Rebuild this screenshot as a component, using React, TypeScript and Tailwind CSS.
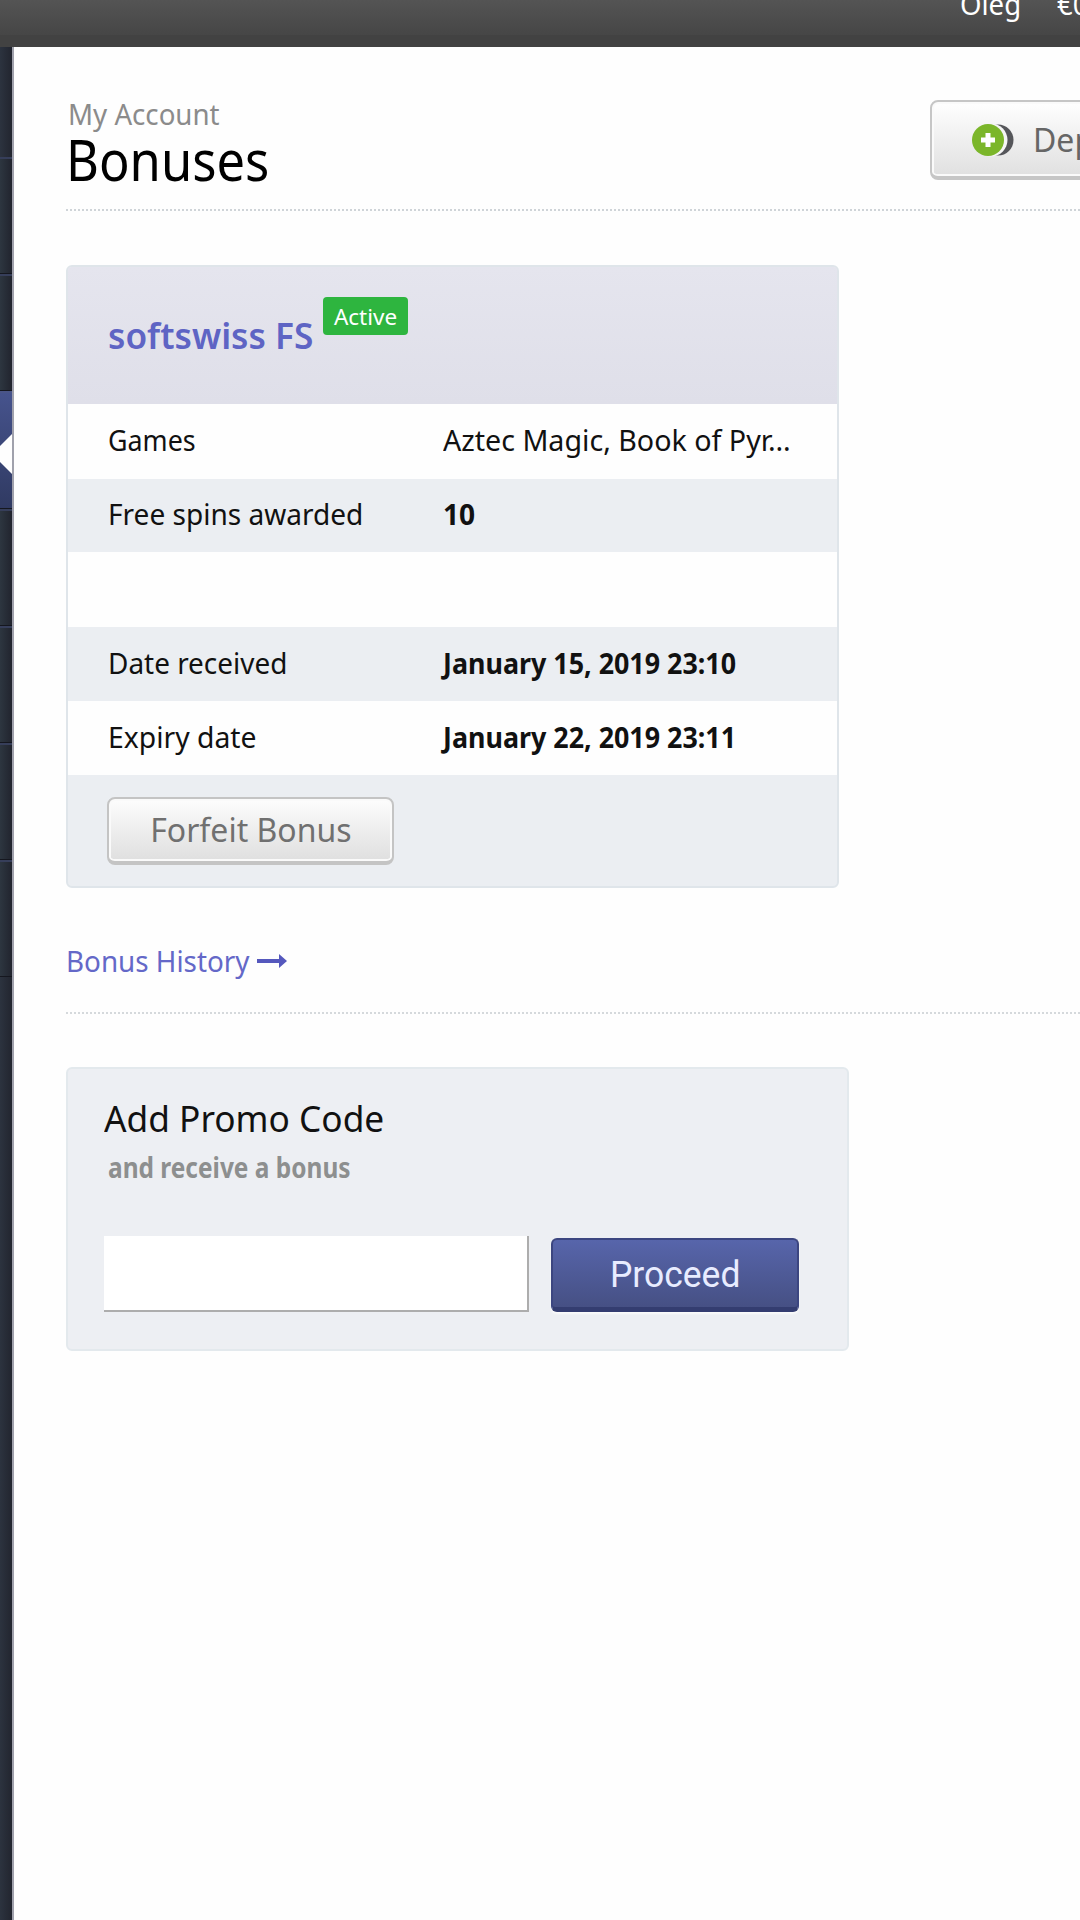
import React from 'react';

const rows = [
  { label: 'Games', labelScale: 'scale-x-[0.925]', value: 'Aztec Magic, Book of Pyr…', valueScale: 'scale-x-[0.987]', height: 'h-[75px]', bg: 'bg-[#fefefe]', bold: false },
  { label: 'Free spins awarded', labelScale: 'scale-x-[0.967]', value: '10', valueScale: 'scale-x-[0.97]', height: 'h-[73px]', bg: 'bg-[#ebeef2]', bold: true },
  { label: '', labelScale: '', value: '', valueScale: '', height: 'h-[75px]', bg: 'bg-[#fefefe]', bold: false },
  { label: 'Date received', labelScale: 'scale-x-[0.963]', value: 'January 15, 2019 23:10', valueScale: 'scale-x-[0.926]', height: 'h-[74px]', bg: 'bg-[#ebeef2]', bold: true },
  { label: 'Expiry date', labelScale: 'scale-x-[0.977]', value: 'January 22, 2019 23:11', valueScale: 'scale-x-[0.926]', height: 'h-[74px]', bg: 'bg-[#fefefe]', bold: true },
];

const menuItems = [
  { id: 1, active: false },
  { id: 2, active: false },
  { id: 3, active: true },
  { id: 4, active: false },
  { id: 5, active: false },
  { id: 6, active: false },
  { id: 7, active: false },
];

function TopBar() {
  return (
    <header className="h-[47px] shrink-0 overflow-hidden bg-linear-to-b from-[#545454] to-[#464646] border-b-[12px] border-[#424242] relative">
      <div className="absolute left-[960px] -top-[15px] flex gap-[33px] text-[29px] leading-[38px] text-white whitespace-nowrap">
        <span className="inline-block origin-left scale-x-[0.95]">Oleg</span>
        <span className="inline-block origin-left scale-x-[0.95]">€0.00</span>
      </div>
    </header>
  );
}

function Sidebar() {
  return (
    <aside className="w-[12px] shrink-0 overflow-hidden bg-linear-to-r from-[#2c333f] to-[#22252f] pt-[110px]">
      {menuItems.map((item) => (
        <div
          key={item.id}
          className={`relative h-[117.2px] border-t-2 border-b border-b-[#15171f] ${
            item.active
              ? 'bg-linear-to-b from-[#46538d] to-[#303a62] border-t-[#4a5588]'
              : 'bg-linear-to-r from-[#2d3640] to-[#21242e] border-t-[#363e5a]'
          }`}
        >
          {item.active && (
            <svg className="absolute left-0 top-[41px]" width="12" height="40" viewBox="0 0 12 40">
              <path d="M12 0 L0 12 Q-5 20 0 28 L12 40 Z" fill="#fefefe" />
            </svg>
          )}
        </div>
      ))}
    </aside>
  );
}

function CoinIcon() {
  return (
    <svg className="shrink-0" width="44" height="34" viewBox="0 0 44 34">
      <circle cx="27" cy="17" r="15.5" fill="#55565a" />
      <circle cx="20" cy="17" r="16.5" fill="#f5f5f5" />
      <circle cx="17" cy="17" r="16" fill="#7bb62a" />
      <path d="M17 10 V24 M10 17 H24" stroke="#fff" strokeWidth="5" />
    </svg>
  );
}

export default function App() {
  return (
    <div className="w-[1080px] h-[1920px] overflow-hidden flex flex-col bg-[#fefefe] font-['Noto_Sans',sans-serif] text-[#111]">
      <TopBar />
      <div className="flex flex-1 min-h-0">
        <Sidebar />
        <main className="flex-1 min-w-0 pl-[52px] border-l-2 border-[#a0a1ac] overflow-hidden">
          <div className="flex justify-between h-[164px] border-b-2 border-dotted border-[#cfd4d8]">
            <div className="pt-[48px] whitespace-nowrap">
              <p className="text-[29px] leading-[38px] text-[#8b8b8b] pl-[2px]">
                <span className="inline-block origin-left scale-x-[0.954]">My Account</span>
              </p>
              <h1 className="text-[57px] leading-[52px] text-black">
                <span className="inline-block origin-left scale-x-[0.889]">Bonuses</span>
              </h1>
            </div>
            <button className="mt-[53px] w-[240px] -mr-[90px] shrink-0 h-[80px] flex items-center gap-[18px] pl-[39px] pt-[2px] border-2 border-b-[4px] border-[#c6c6c6] rounded-lg bg-linear-to-b from-white to-[#e0e0e0] text-[33px] text-[#666] shadow-[inset_0_0_0_2px_#fafafa]">
              <CoinIcon />
              <span className="inline-block origin-left scale-x-[0.969]">Deposit</span>
            </button>
          </div>

          {/* Active bonus */}
          <section className="mt-[54px] w-[773px] h-[623px] border-2 border-[#dfe5ea] rounded-md overflow-hidden bg-[#ebeef2] whitespace-nowrap">
            <div className="h-[137px] pl-[40px] flex bg-linear-to-b from-[#e5e5ee] to-[#dfdfe9]">
              <h2 className="w-[215px] pt-[44px] text-[36px] leading-[50px] font-semibold text-[#5e64c4]">
                <span className="inline-block origin-left scale-x-[0.979]">softswiss FS</span>
              </h2>
              <span className="mt-[30px] w-[85px] h-[38px] rounded-[4px] bg-[#2eb53f] text-white text-[22.5px] leading-[39px] text-center">
                Active
              </span>
            </div>
            {rows.map((row, i) => (
              <div key={i} className={`flex items-center pb-[3px] text-[29px] ${row.height} ${row.bg}`}>
                <div className="w-[375px] pl-[40px]">
                  <span className={`inline-block origin-left ${row.labelScale}`}>{row.label}</span>
                </div>
                <div className={row.bold ? 'font-bold' : ''}>
                  <span className={`inline-block origin-left ${row.valueScale}`}>{row.value}</span>
                </div>
              </div>
            ))}
            <div className="pl-[39px] pt-[22px]">
              <button className="w-[287px] h-[68px] border-2 border-b-[4px] border-[#c4c4c4] rounded-lg bg-linear-to-b from-[#fdfdfd] to-[#dfdfdf] text-[33px] text-[#707070] shadow-[inset_0_0_0_2px_#fafafa]">
                <span className="inline-block scale-x-[0.969]">Forfeit Bonus</span>
              </button>
            </div>
          </section>

          <div className="h-[126px] pt-[54px] border-b-2 border-dotted border-[#d5d9dc] text-[29px] leading-[38px] text-[#6468c8]">
            <a href="#" className="flex items-center gap-[8px] whitespace-nowrap">
              <span className="w-[183px]">
                <span className="inline-block origin-left scale-x-[0.959]">Bonus History</span>
              </span>
              <svg width="30" height="14" viewBox="0 0 30 14">
                <path d="M0 5 H22 V0 L30 7 L22 14 V9 H0 Z" fill="#5558bd" />
              </svg>
            </a>
          </div>

          {/* Promo code */}
          <section className="mt-[53px] w-[783px] h-[284px] border-2 border-[#e3e9ed] rounded-md bg-[#edeff3] pl-[36px] pt-[25px] whitespace-nowrap">
            <h3 className="text-[37px] leading-[48px] text-[#111]">
              <span className="inline-block origin-left scale-x-[0.953]">Add Promo Code</span>
            </h3>
            <p className="pl-[4px] text-[29px] leading-[50px] font-bold text-[#8d8f8f]">
              <span className="inline-block origin-left scale-x-[0.843]">and receive a bonus</span>
            </p>
            <form className="mt-[44px] flex items-start gap-[22px]">
              <input type="text" className="w-[425px] h-[76px] bg-white border-r-2 border-b-2 border-[#adadad] outline-none" />
              <button
                type="button"
                className="mt-[2px] w-[248px] h-[74px] pt-[2px] rounded-md border-2 border-[#3c4680] border-b-[5px] border-b-[#343d70] bg-linear-to-b from-[#5765ab] to-[#465084] font-['Roboto',sans-serif] text-[36px] text-[#e8ecff] shadow-[0_2px_2px_#fafafa]"
              >
                <span className="inline-block scale-x-[0.985]">Proceed</span>
              </button>
            </form>
          </section>
        </main>
      </div>
    </div>
  );
}
